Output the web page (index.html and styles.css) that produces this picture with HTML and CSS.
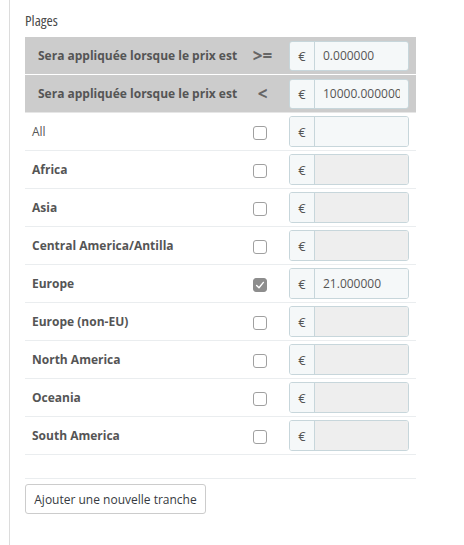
FILE: index.html
```html
<!DOCTYPE html>
<html lang="fr">
<head>
<meta charset="utf-8">
<title>Plages</title>
<link rel="stylesheet" href="styles.css">
</head>
<body>
<div class="panel">
  <h3 class="title">Plages</h3>
  <table class="ranges">
    <colgroup><col class="c1"><col class="c2"><col class="c3"></colgroup>
    <tr class="head">
      <td class="htext">Sera appliquée lorsque le prix est</td>
      <td class="op">&gt;=</td>
      <td><div class="ig"><span class="addon">€</span><input class="field" type="text" value="0.000000"></div></td>
    </tr>
    <tr class="head">
      <td class="htext">Sera appliquée lorsque le prix est</td>
      <td class="op">&lt;</td>
      <td><div class="ig"><span class="addon">€</span><input class="field" type="text" value="10000.000000"></div></td>
    </tr>
    <tr>
      <td class="zone normal">All</td>
      <td class="chk"><span class="box"></span></td>
      <td><div class="ig"><span class="addon">€</span><input class="field" type="text" value=""></div></td>
    </tr>
    <tr>
      <td class="zone">Africa</td>
      <td class="chk"><span class="box"></span></td>
      <td><div class="ig"><span class="addon">€</span><input class="field off" type="text" value="" disabled></div></td>
    </tr>
    <tr>
      <td class="zone">Asia</td>
      <td class="chk"><span class="box"></span></td>
      <td><div class="ig"><span class="addon">€</span><input class="field off" type="text" value="" disabled></div></td>
    </tr>
    <tr>
      <td class="zone">Central America/Antilla</td>
      <td class="chk"><span class="box"></span></td>
      <td><div class="ig"><span class="addon">€</span><input class="field off" type="text" value="" disabled></div></td>
    </tr>
    <tr>
      <td class="zone">Europe</td>
      <td class="chk"><span class="box on"><svg viewBox="0 0 14 14" width="14" height="14"><path d="M3.6 7.4 L6 9.8 L10.4 4.4" fill="none" stroke="#fff" stroke-width="1.4" stroke-linecap="round" stroke-linejoin="round"/></svg></span></td>
      <td><div class="ig"><span class="addon">€</span><input class="field" type="text" value="21.000000"></div></td>
    </tr>
    <tr>
      <td class="zone">Europe (non-EU)</td>
      <td class="chk"><span class="box"></span></td>
      <td><div class="ig"><span class="addon">€</span><input class="field off" type="text" value="" disabled></div></td>
    </tr>
    <tr>
      <td class="zone">North America</td>
      <td class="chk"><span class="box"></span></td>
      <td><div class="ig"><span class="addon">€</span><input class="field off" type="text" value="" disabled></div></td>
    </tr>
    <tr>
      <td class="zone">Oceania</td>
      <td class="chk"><span class="box"></span></td>
      <td><div class="ig"><span class="addon">€</span><input class="field off" type="text" value="" disabled></div></td>
    </tr>
    <tr>
      <td class="zone">South America</td>
      <td class="chk"><span class="box"></span></td>
      <td><div class="ig"><span class="addon">€</span><input class="field off" type="text" value="" disabled></div></td>
    </tr>
  </table>
  <div class="footer">
    <button class="btn" type="button">Ajouter une nouvelle tranche</button>
  </div>
</div>
</body>
</html>
```

FILE: styles.css
```css
html, body {
  margin: 0;
  padding: 0;
  background: #fff;
}
body {
  font-family: "Open Sans", "Liberation Sans", sans-serif;
  font-size: 12px;
  color: #555;
}
.panel {
  margin-left: 9px;
  border-left: 1px solid #dcdcdc;
  min-height: 545px;
  box-sizing: border-box;
  padding: 12px 0 0 15px;
  width: 407px;
}
.title {
  margin: 0 0 8px 0;
  font-family: "Open Sans", "Liberation Sans", sans-serif;
  font-stretch: 85%;
  font-weight: 500;
  font-size: 15px;
  line-height: 17px;
  color: #4a4a4a;
}
.ranges {
  border-collapse: collapse;
  table-layout: fixed;
  width: 391px;
}
.c1 { width: 214px; }
.c2 { width: 42px; }
.c3 { width: 135px; }
.ranges td {
  height: 37px;
  padding: 0;
  border-bottom: 1px solid #eaedef;
  vertical-align: middle;
}
.head td {
  background: #cccccc;
  border-bottom: 1px solid #fff;
}
.head:nth-child(2) td {
  border-bottom: 1px solid #e6e6e6;
}
.htext {
  padding-left: 13px !important;
  font-weight: bold;
  color: #555;
  white-space: nowrap;
  overflow: visible;
}
.op {
  text-align: center;
  font-weight: bold;
  font-size: 17px;
  color: #666;
  padding-left: 5px !important;
}
.zone {
  padding-left: 7px !important;
  font-weight: bold;
  color: #555;
}
.zone.normal {
  font-weight: normal;
}
.chk {
  text-align: center;
}
.box {
  display: inline-block;
  vertical-align: middle;
  width: 14px;
  height: 14px;
  box-sizing: border-box;
  border: 1px solid #a0a0a0;
  border-radius: 3px;
  background: #fff;
  position: relative;
}
.box.on {
  background: #8d8d8d;
  border-color: #8d8d8d;
}
.box svg {
  position: absolute;
  left: -1px;
  top: -1px;
}
.ig {
  display: flex;
  margin-left: 8px;
  width: 120px;
  height: 31px;
  box-sizing: border-box;
  border: 1px solid #c7d6db;
  border-radius: 3px;
  overflow: hidden;
}
.head .ig {
  height: 30px;
}
.addon {
  flex: 0 0 24px;
  display: flex;
  align-items: center;
  justify-content: center;
  background: #f5f8f9;
  border-right: 1px solid #c7d6db;
  color: #555;
  font-size: 13px;
}
.field {
  flex: 1 1 auto;
  min-width: 0;
  border: 0;
  margin: 0;
  padding: 0 8px 0 8px;
  background: #f5f8f9;
  font-family: "Open Sans", "Liberation Sans", sans-serif;
  font-size: 12px;
  color: #555;
  outline: none;
}
.field.off {
  background: #eeeeee;
}
.footer {
  margin-top: 23px;
  border-top: 1px solid #eaedef;
  width: 391px;
  padding-top: 5px;
}
.btn {
  height: 30px;
  width: 181px;
  box-sizing: border-box;
  border: 1px solid #cccccc;
  border-radius: 3px;
  background: #fff;
  font-family: "Open Sans", "Liberation Sans", sans-serif;
  font-size: 12px;
  color: #363a41;
  padding: 0 8px;
  white-space: nowrap;
}
```
